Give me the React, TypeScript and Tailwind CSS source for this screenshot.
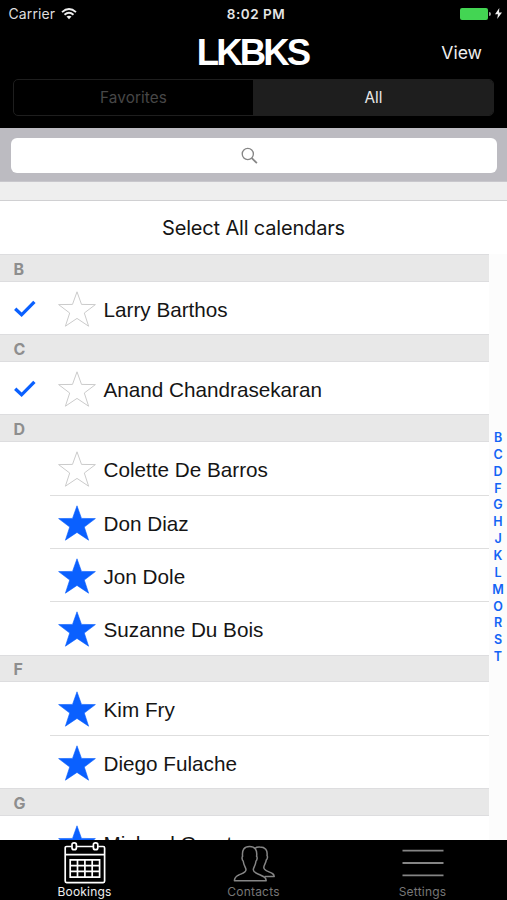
type Person = { name: string; starred?: boolean; checked?: boolean };
type Group = { letter: string; people: Person[] };

const groups: Group[] = [
  { letter: 'B', people: [{ name: 'Larry Barthos', checked: true }] },
  { letter: 'C', people: [{ name: 'Anand Chandrasekaran', checked: true }] },
  {
    letter: 'D',
    people: [
      { name: 'Colette De Barros' },
      { name: 'Don Diaz', starred: true },
      { name: 'Jon Dole', starred: true },
      { name: 'Suzanne Du Bois', starred: true },
    ],
  },
  {
    letter: 'F',
    people: [
      { name: 'Kim Fry', starred: true },
      { name: 'Diego Fulache', starred: true },
    ],
  },
  { letter: 'G', people: [{ name: 'Michael Grant', starred: true }] },
];

function Star({ filled }: { filled?: boolean }) {
  return (
    <svg className="block h-9 w-[38px]" viewBox="0 0 38 36">
      <path
        d="M19 0.8 L23.5 13.4 L37.4 13.6 L26.3 22 L30.6 35.2 L19 27.4 L7.4 35.2 L11.7 22 L0.6 13.6 L14.5 13.4 Z"
        fill={filled ? '#0a60ff' : 'none'}
        stroke={filled ? '#0a60ff' : '#cbcbcb'}
        strokeWidth={filled ? 0.6 : 1}
      />
    </svg>
  );
}

function Check() {
  return (
    <svg className="block h-[18px] w-[22px]" viewBox="0 0 22 18">
      <path d="M1.2 8.8 L7.6 14.8 L20.4 1.8" fill="none" stroke="#0a60ff" strokeWidth="3.3" />
    </svg>
  );
}

function Row({ person, last }: { person: Person; last: boolean }) {
  return (
    <div className={`flex bg-white ${last ? 'h-[52.4px]' : 'h-[53.4px]'}`}>
      <div className="flex w-[50px] items-start pl-[14px] pt-[18px]">{person.checked && <Check />}</div>
      <div className={`flex flex-1 items-start border-b pl-[7.5px] ${last ? 'border-transparent' : 'border-[#dedede]'}`}>
        <div className="pt-[9px]">
          <Star filled={person.starred} />
        </div>
        <span className="pl-[8px] pt-[16px] text-[20.7px] leading-6 whitespace-nowrap text-[#151515]">{person.name}</span>
      </div>
    </div>
  );
}

function CalendarIcon() {
  return (
    <svg className="h-[42px] w-[42px]" viewBox="0 0 42 42" fill="none" stroke="#fff" strokeWidth="1.7">
      <path d="M7.6 4.5 H2.6 Q1.2 4.5 1.2 6 V39 Q1.2 40.6 2.6 40.6 H39.2 Q40.6 40.6 40.6 39 V6 Q40.6 4.5 39.2 4.5 H34.2 M12.6 4.5 H29.2 M1.2 12.6 H40.6" />
      <rect x="8" y="0.9" width="4.4" height="6.8" rx="2" />
      <rect x="29.4" y="0.9" width="4.4" height="6.8" rx="2" />
      <path d="M6.2 17.8 H35.6 V35.2 H6.2 Z M13.5 17.8 V35.2 M20.9 17.8 V35.2 M28.2 17.8 V35.2 M6.2 23.6 H35.6 M6.2 29.4 H35.6" />
    </svg>
  );
}

function PeopleIcon() {
  return (
    <svg className="h-[42px] w-[42px]" viewBox="0 0 42 42" fill="none" stroke="#858585" strokeWidth="1.5" strokeLinejoin="round">
      <path d="M1.4 38.8 C1.5 35.6 2.6 34.6 5.4 33.2 C9.6 31.3 13 30.6 13 27.8 C13 25.6 10.7 23.8 10.2 19 C9 18.2 8.7 15 9.6 14.4 C8.8 7.8 11.2 4.5 16.6 4.5 C22 4.5 24.4 7.8 23.6 14.4 C24.5 15 24.2 18.2 23 19 C22.5 23.8 20.3 25.6 20.3 27.8 C20.3 30.6 23.6 31.3 27.8 33.2 C31.4 34.8 33 35.6 33.2 38.8 Z" />
      <path d="M22.2 6.2 C23.4 5 25 4.9 26.8 5 C32.2 5 34.8 8 34 13.6 C34.9 14.3 34.4 17.2 33.3 17.9 C32.8 21.6 30.8 23.2 30.8 25.4 C30.8 27.8 33 28.6 36 29.9 C39.4 31.3 41 31.8 41.2 34.5 H31.6" />
    </svg>
  );
}

export default function App() {
  return (
    <div className="relative flex h-[900px] w-[507px] flex-col overflow-hidden bg-white font-['Liberation_Sans',Arial,sans-serif]">
      <header className="h-[128px] shrink-0 bg-black font-['Inter',sans-serif] text-white">
        <div className="grid h-[27px] grid-cols-3 items-center">
          <div className="flex items-center gap-[6px] pl-[8.5px]">
            <span className="text-[14px] leading-4 tracking-[0.1px] text-[#dedede]">Carrier</span>
            <svg className="h-[12px] w-[16px]" viewBox="0 0 16 12" fill="none" stroke="#eee" strokeWidth="1.9">
              <path d="M1 4.1 Q8 -2 15 4.1 M3.5 6.8 Q8 2.9 12.5 6.8" />
              <path d="M8 11.2 L5.5 8.6 Q8 6.8 10.5 8.6 Z" fill="#eee" stroke="none" />
            </svg>
          </div>
          <div className="pl-[5px] text-center text-[13.5px] leading-4 font-semibold tracking-[0.5px] text-[#e5e5e5]">8:02 PM</div>
          <div className="flex items-center justify-end gap-[1px] pr-[5px]">
            <div className="h-[12px] w-[28px] rounded-[2px] bg-[#43d553]" />
            <div className="h-[4px] w-[2px] rounded-r-full bg-[#a0a0a0]" />
            <svg className="ml-[3px] h-[11px] w-[7px]" viewBox="0 0 7 11">
              <path d="M4.3 0 L0 6.2 H3 L2.2 11 L7 4.5 H4 Z" fill="#eee" />
            </svg>
          </div>
        </div>
        <div className="grid h-[52px] grid-cols-[1fr_auto_1fr] items-center">
          <div />
          <h1 className="pr-[2px] font-['Liberation_Sans',Arial,sans-serif] text-[36.5px] leading-[52px] font-bold tracking-[-2.8px]">LKBKS</h1>
          <div className="pr-[25px] text-right text-[17.6px] leading-6 text-[#eee]">View</div>
        </div>
        <div className="mx-[13px] flex h-[37px] overflow-hidden rounded-[5px] border border-[#1e1e1e] text-[15.3px]">
          <div className="flex w-[239px] items-center justify-center pt-px tracking-[0.1px] text-[#474747]">Favorites</div>
          <div className="flex flex-1 items-center justify-center bg-[#1e1e1e] pt-px pl-px text-[#e8e8e8]">All</div>
        </div>
      </header>

      <div className="h-[54px] shrink-0 border-b border-[#c8c7cc] bg-[#bcbbc1] px-[10.5px] pt-[9.5px]">
        <div className="flex h-[35px] items-center justify-center rounded-[6px] bg-white">
          <svg className="mr-[9px] h-[17px] w-[17px]" viewBox="0 0 18 18" fill="none" stroke="#858585" strokeWidth="1.4">
            <circle cx="7.2" cy="7.4" r="5.9" />
            <path d="M11.4 11.7 L16.8 17" strokeWidth="1.9" />
          </svg>
        </div>
      </div>

      <div className="h-[19px] shrink-0 border-b border-[#d0d0d2] bg-[#eee]" />
      <div className="flex h-[53.3px] shrink-0 items-center justify-center font-['Inter',sans-serif] text-[20px] tracking-[-0.18px] text-[#151515]">
        Select All calendars
      </div>

      <div className="flex h-[585.7px] shrink-0 overflow-hidden">
        <main className="w-[489px]">
          {groups.map((g) => (
            <section key={g.letter}>
              <div className="flex h-[27.7px] items-center border-y border-[#dddddf] bg-[#e8e8e8] pl-[13.5px] pt-[1px] font-['Inter',sans-serif] text-[16px] leading-5 font-bold text-[#8e8e8e]">
                {g.letter}
              </div>
              {g.people.map((p, i) => (
                <Row key={p.name} person={p} last={i === g.people.length - 1} />
              ))}
            </section>
          ))}
        </main>
        <nav className="flex flex-1 flex-col items-center bg-[#fcfcfc] pt-[175.8px] font-['Inter',sans-serif] text-[12.5px] leading-[16.85px] font-semibold text-[#1264f5]">
          {'BCDFGHJKLMORST'.split('').map((l) => (
            <span key={l}>{l}</span>
          ))}
        </nav>
      </div>

      <footer className="grid h-[60px] shrink-0 grid-cols-3 bg-black font-['Inter',sans-serif] text-[12px] leading-[14px] tracking-[0.2px] text-[#777]">
        <div className="flex flex-col items-center pt-[2px] text-[#eee]">
          <CalendarIcon />
          <span className="pt-px">Bookings</span>
        </div>
        <div className="flex flex-col items-center pt-[2px]">
          <PeopleIcon />
          <span className="pt-px">Contacts</span>
        </div>
        <div className="flex flex-col items-center pt-[2px]">
          <svg className="h-[42px] w-[42px]" viewBox="0 0 42 42" stroke="#858585" strokeWidth="1.8">
            <path d="M0.5 8.7 H41.5 M0.5 21 H41.5 M0.5 33.3 H41.5" />
          </svg>
          <span className="pt-px">Settings</span>
        </div>
      </footer>
    </div>
  );
}
